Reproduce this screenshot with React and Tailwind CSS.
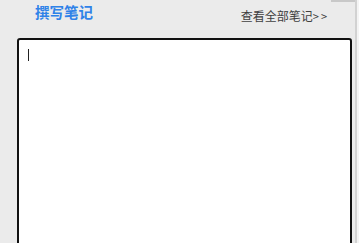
import React from "react";

const App = () => {
  return (
    <div
      className="relative w-[359px] h-[243px] overflow-hidden bg-[#ebebeb]"
      style={{ fontFamily: '"Noto Sans CJK SC", "Liberation Sans", sans-serif' }}
    >
      {/* right edge bits */}
      <div className="absolute right-[4px] top-0 w-[24px] h-[2px] bg-[#c8c8c8]" />
      <div className="absolute right-[2px] top-0 w-[2px] h-full bg-[#d2d2d2]" />
      <div className="absolute right-0 top-0 w-[2px] h-full bg-[#f4f4f4]" />

      <div className="flex items-start justify-between pl-[35px] pr-[30px] h-[38px]">
        <h2 className="text-[14.5px] leading-[24px] font-semibold text-[#2f82e8]">
          撰写笔记
        </h2>
        <a className="mt-[4px] text-[12px] leading-[24px] text-[#404040] cursor-pointer">
          查看全部笔记
          <span className="text-[11px] tracking-[2px]">&gt;&gt;</span>
        </a>
      </div>

      <div className="ml-[17px] mr-[7px] h-[220px] bg-white border-2 border-[#111] rounded-[3px] px-[9px] pt-[9px]">
        <div className="w-px h-[12px] bg-[#222]" />
      </div>
    </div>
  );
};

export default App;
